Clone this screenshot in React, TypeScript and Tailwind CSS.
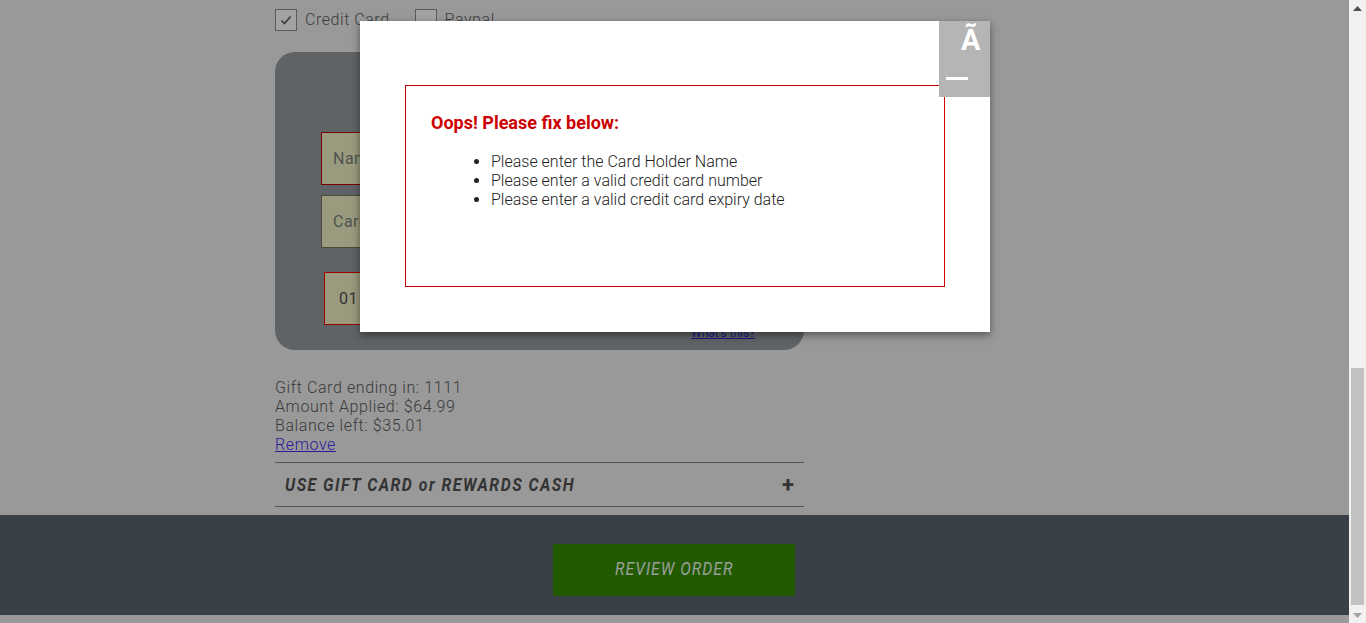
import React from "react";

const body = { fontFamily: "Roboto, 'Liberation Sans', sans-serif" };

function Checkbox({ checked }: { checked?: boolean }) {
  return (
    <span className="flex h-[22px] w-[22px] items-center justify-center border border-[#5c5c5c] bg-[#a3a3a3]">
      {checked && (
        <svg width="14" height="14" viewBox="0 0 14 14" fill="none">
          <path d="M2.5 7.5l3 3 6-7" stroke="#3a3a3a" strokeWidth="1.6" />
        </svg>
      )}
    </span>
  );
}

function ErrorModal() {
  const errors = [
    "Please enter the Card Holder Name",
    "Please enter a valid credit card number",
    "Please enter a valid credit card expiry date",
  ];
  return (
    <div className="absolute left-[360px] top-[21px] h-[311px] w-[630px] bg-white shadow-[0_3px_8px_rgba(0,0,0,0.45)]">
      {/* close button with garbled glyph */}
      <div className="absolute right-0 top-0 flex h-[76px] w-[51px] flex-col bg-[#b5b5b5] text-white">
        <span className="ml-[22px] mt-[2px] text-[29px] font-bold leading-[34px]">Ã</span>
        <span className="ml-[7px] mt-[20px] h-[3px] w-[22px] bg-white" />
      </div>

      <div className="ml-[45px] mt-[64px] h-[202px] w-[540px] border border-[#cc0000] px-[25px] pt-[26px]">
        <h2 className="text-[18px] font-bold leading-[22px] text-[#cc0000]">Oops! Please fix below:</h2>
        <ul className="mt-[18px] list-disc pl-[60px] text-[16px] font-light leading-[19px] text-[#222]">
          {errors.map((e) => (
            <li key={e}>{e}</li>
          ))}
        </ul>
      </div>
    </div>
  );
}

export default function App() {
  return (
    <div className="relative flex h-[623px] w-[1366px] overflow-hidden bg-[#999999]" style={body}>
      <div className="flex w-[1349px] flex-col">
        <div className="ml-[275px] w-[529px]">
          {/* payment method */}
          <div className="mt-[8px] flex items-center text-[16px] font-light tracking-[0.55px] text-[#3c3c3c]">
            <Checkbox checked />
            <span className="ml-[8px]">Credit Card</span>
            <span className="ml-[25px]">
              <Checkbox />
            </span>
            <span className="ml-[8px]">Paypal</span>
          </div>

          {/* card panel */}
          <div className="mt-[20px] h-[298px] rounded-[20px] bg-[#606366] pt-[80px]">
            <div className="ml-[46px] flex h-[53px] w-[320px] items-center border border-[#7a0000] bg-[#9a9a7e] px-[11px] text-[16px] tracking-[0.5px] text-[#4e5450]">
              Name on Card
            </div>
            <div className="ml-[46px] mt-[10px] flex h-[53px] w-[320px] items-center border border-[#4a4a3a] bg-[#9a9a7e] px-[11px] text-[16px] tracking-[0.5px] text-[#4e5450]">
              Card Number
            </div>
            <div className="ml-[49px] mt-[24px] flex h-[53px] w-[100px] items-center border border-[#a00000] bg-[#9a9a7e] px-[14px] text-[16px] tracking-[0.5px] text-[#333]">
              01
            </div>
            <div className="ml-[416px] mt-[1px] text-[12px] leading-[14px] text-[#1a1a80] underline">What's this?</div>
          </div>

          {/* gift card summary */}
          <div className="mt-[28px] text-[16px] font-light leading-[19px] tracking-[0.6px] text-[#3a3a3a]">
            <p>Gift Card ending in: 1111</p>
            <p>Amount Applied: $64.99</p>
            <p>Balance left: $35.01</p>
            <p className="text-[#2a1a99] underline">Remove</p>
          </div>

          <div className="mt-[8px] flex h-[45px] items-center justify-between border-y border-[#555] pl-[10px] pr-[10px]">
            <span className="origin-left text-[18px] font-bold italic tracking-[1.7px] text-[#333] [transform:scaleX(0.88)]">
              USE GIFT CARD or REWARDS CASH
            </span>
            <span className="text-[22px] font-bold leading-none text-[#333]">+</span>
          </div>
        </div>

        {/* footer */}
        <div className="mt-[8px] flex h-[100px] justify-center bg-[#3a4048] pt-[29px]">
          <div className="ml-[-1px] flex h-[52px] w-[242px] items-center justify-center bg-[#225a00] pb-[4px]">
            <span className="text-[18px] italic tracking-[1.1px] text-[#9aa09a] [transform:scaleX(0.88)]">REVIEW ORDER</span>
          </div>
        </div>
      </div>

      {/* scrollbar */}
      <div className="flex w-[17px] flex-col items-center bg-[#f1f1f1]">
        <svg className="mt-[6px]" width="9" height="5" viewBox="0 0 9 5">
          <path d="M0 5L4.5 0L9 5z" fill="#505050" />
        </svg>
        <div className="mt-[357px] h-[237px] w-[13px] bg-[#c1c1c1]" />
        <svg className="mt-[8px]" width="9" height="5" viewBox="0 0 9 5">
          <path d="M0 0L9 0L4.5 5z" fill="#a3a3a3" />
        </svg>
      </div>

      <ErrorModal />
    </div>
  );
}
